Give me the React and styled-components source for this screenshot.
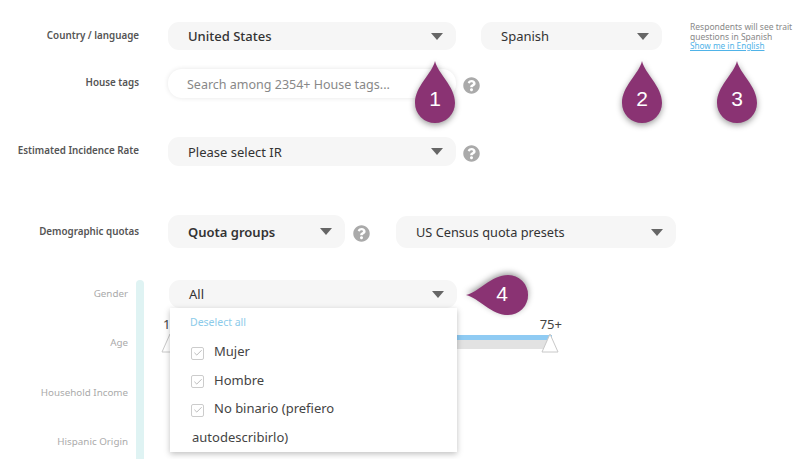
import styled, { createGlobalStyle } from 'styled-components';
import { FaQuestionCircle } from 'react-icons/fa';
import { Check } from 'lucide-react';

const GlobalStyle = createGlobalStyle`
  html, body {
    margin: 0;
    background: #fff;
    font-family: "Noto Sans", "Open Sans", sans-serif;
  }
`;

const Pin = ({ number, x, y, sideways }) => (
  <PinBox $x={x} $y={y} $sideways={sideways}>
    <PinShape viewBox="0 0 40 62" $sideways={sideways}>
      <path d="M20 0 C23 13 40 25 40 42 A20 20 0 0 1 0 42 C0 25 17 13 20 0 Z" fill="#8a3373" />
    </PinShape>
    <PinNumber $sideways={sideways}>{number}</PinNumber>
  </PinBox>
);

const Select = ({ width, height, weight, size, children }) => (
  <SelectBox $width={width} $height={height}>
    <SelectText $weight={weight} $size={size}>{children}</SelectText>
    <Caret />
  </SelectBox>
);

const Help = ({ gap }) => (
  <HelpIcon $gap={gap}>
    <FaQuestionCircle size={17} />
  </HelpIcon>
);

const Option = ({ children }) => (
  <OptionRow>
    <CheckBox><Check size={10} strokeWidth={1.6} /></CheckBox>
    {children}
  </OptionRow>
);

const SliderHandle = ({ side }) => (
  <Handle $side={side} viewBox="0 0 18 20">
    <path d="M9 1 L17 19 L1 19 Z" fill="#fff" stroke="#c8c8c8" strokeLinejoin="round" />
  </Handle>
);

const App = () => (
  <Page>
    <GlobalStyle />

    <Row>
      <RowLabel>Country / language</RowLabel>
      <Select width={288} weight={500}>United States</Select>
      <Spaced $gap={25}>
        <Select width={181}>Spanish</Select>
      </Spaced>
      <Note>
        Respondents will see trait questions in Spanish
        <NoteLink href="#">Show me in English</NoteLink>
      </Note>
    </Row>

    <Row $top={19}>
      <RowLabel>House tags</RowLabel>
      <SearchInput placeholder="Search among 2354+ House tags..." />
      <Help />
    </Row>

    <Row $top={39}>
      <RowLabel>Estimated Incidence Rate</RowLabel>
      <Select width={288} height={29}>Please select IR</Select>
      <Help />
    </Row>

    <Row $top={49}>
      <RowLabel $height={33}>Demographic quotas</RowLabel>
      <Select width={177} height={33} weight={600}>Quota groups</Select>
      <Help gap={8} />
      <Spaced $gap={26} $top={1}>
        <Select width={280} height={32} size={12.75}>US Census quota presets</Select>
      </Spaced>
    </Row>

    <QuotaSection>
      <QuotaLabels>
        <QuotaLabel>Gender</QuotaLabel>
        <QuotaLabel>Age</QuotaLabel>
        <QuotaLabel>Household Income</QuotaLabel>
        <QuotaLabel>Hispanic Origin</QuotaLabel>
      </QuotaLabels>
      <Rail />
      <QuotaContent>
        <Select width={288}>All</Select>
        <Slider>
          <SliderValues>
            <span>18</span>
            <span>75+</span>
          </SliderValues>
          <Track>
            <TrackFill />
          </Track>
          <SliderHandle side="left" />
          <SliderHandle side="right" />
        </Slider>
        <Menu>
          <Deselect>Deselect all</Deselect>
          <Option>Mujer</Option>
          <Option>Hombre</Option>
          <Option>No binario (prefiero autodescribirlo)</Option>
        </Menu>
      </QuotaContent>
    </QuotaSection>

    <Pin number="1" x={415} y={61} />
    <Pin number="2" x={622} y={61} />
    <Pin number="3" x={717} y={61} />
    <Pin number="4" x={466} y={275} sideways />
  </Page>
);

/* ================= STYLES ================= */

const Page = styled.div`
  position: relative;
  width: 800px;
  height: 459px;
  padding-top: 22px;
  box-sizing: border-box;
  overflow: hidden;
`;

const Row = styled.div`
  display: flex;
  align-items: flex-start;
  margin-top: ${(p) => p.$top || 0}px;
`;

const RowLabel = styled.div`
  width: 139px;
  margin-right: 29px;
  flex-shrink: 0;
  text-align: right;
  font-size: 9.8px;
  font-weight: 600;
  line-height: ${(p) => p.$height || 28}px;
  color: #555;
  white-space: nowrap;
`;

const Spaced = styled.div`
  margin-left: ${(p) => p.$gap}px;
  margin-top: ${(p) => p.$top || 0}px;
`;

const SelectBox = styled.div`
  display: flex;
  align-items: center;
  justify-content: space-between;
  box-sizing: border-box;
  width: ${(p) => p.$width}px;
  height: ${(p) => p.$height || 28}px;
  padding: 0 13px 0 20px;
  background: #f6f6f6;
  border-radius: 11px;
`;

const SelectText = styled.span`
  font-size: ${(p) => p.$size || 13}px;
  font-weight: ${(p) => p.$weight || 400};
  color: #333;
  white-space: nowrap;
`;

const Caret = styled.span`
  width: 0;
  height: 0;
  border-left: 6.5px solid transparent;
  border-right: 6.5px solid transparent;
  border-top: 7px solid #666;
`;

const Note = styled.div`
  width: 105px;
  height: 28px;
  margin-left: 28px;
  font-size: 8.5px;
  line-height: 9.5px;
  color: #888;
`;

const NoteLink = styled.a`
  display: block;
  font-size: 8.2px;
  color: #4fb3e8;
  text-decoration: underline;
`;

const SearchInput = styled.input`
  box-sizing: border-box;
  width: 288px;
  height: 29px;
  padding: 1px 19px 0;
  border: none;
  outline: none;
  border-radius: 14px;
  background: #fff;
  box-shadow: 0 0 5px rgba(0, 0, 0, 0.1);
  font-family: inherit;
  font-size: 12.5px;

  &::placeholder {
    color: #888;
    opacity: 1;
  }
`;

const HelpIcon = styled.span`
  display: flex;
  align-items: center;
  align-self: stretch;
  box-sizing: border-box;
  padding-top: 3px;
  margin-left: ${(p) => p.$gap || 7}px;
  color: #aaa;
`;

const QuotaSection = styled.div`
  display: flex;
  margin-top: 32px;
`;

const QuotaLabels = styled.div`
  width: 128px;
  flex-shrink: 0;
`;

const QuotaLabel = styled.div`
  height: 49.33px;
  line-height: 28px;
  text-align: right;
  font-size: 9.8px;
  color: #aaa;
  white-space: nowrap;
`;

const Rail = styled.div`
  width: 8px;
  height: 200px;
  margin-left: 8px;
  background: #dff3f3;
  border-radius: 4px 4px 0 0;
`;

const QuotaContent = styled.div`
  position: relative;
  margin-left: 25px;
`;

const Slider = styled.div`
  position: relative;
  width: 401px;
  margin: 9px 0 0 -8px;
`;

const SliderValues = styled.div`
  display: flex;
  justify-content: space-between;
  height: 18px;
  padding-left: 2px;
  font-size: 13px;
  line-height: 14px;
  color: #444;
`;

const Track = styled.div`
  height: 14px;
  margin: 0 10px 0 10px;
  background: #e2e2e2;
`;

const TrackFill = styled.div`
  height: 5px;
  background: #8fcbf3;
`;

const Handle = styled.svg`
  position: absolute;
  top: 16px;
  width: 18px;
  height: 20px;
  ${(p) => (p.$side === 'left' ? 'left: 0;' : 'right: 3px;')}
`;

const Menu = styled.div`
  position: absolute;
  top: 28px;
  left: 1px;
  box-sizing: border-box;
  width: 287px;
  height: 144px;
  padding: 6px 100px 0 22px;
  background: #fff;
  box-shadow: 0 2px 6px rgba(0, 0, 0, 0.25);
`;

const Deselect = styled.div`
  margin: 0 0 7px -2px;
  font-size: 10.5px;
  line-height: 16px;
  color: #8ccbea;
`;

const OptionRow = styled.div`
  font-size: 13px;
  line-height: 28.5px;
  color: #444;
`;

const CheckBox = styled.span`
  display: inline-flex;
  align-items: center;
  justify-content: center;
  box-sizing: border-box;
  width: 13px;
  height: 13px;
  margin: 0 10px 0 -1px;
  vertical-align: -2px;
  border: 1px solid #ccc;
  border-radius: 2px;
  color: #999;
`;

const PinBox = styled.div`
  position: absolute;
  left: ${(p) => p.$x}px;
  top: ${(p) => p.$y}px;
  width: ${(p) => (p.$sideways ? 62 : 40)}px;
  height: ${(p) => (p.$sideways ? 40 : 62)}px;
`;

const PinShape = styled.svg`
  position: absolute;
  left: ${(p) => (p.$sideways ? 11 : 0)}px;
  top: ${(p) => (p.$sideways ? -11 : 0)}px;
  width: 40px;
  height: 62px;
  transform: ${(p) => (p.$sideways ? 'rotate(-90deg)' : 'none')};
  filter: drop-shadow(${(p) => (p.$sideways ? '2px 0' : '0 2px')} 3px rgba(0, 0, 0, 0.4));
`;

const PinNumber = styled.span`
  position: absolute;
  left: ${(p) => (p.$sideways ? 16 : 0)}px;
  bottom: ${(p) => (p.$sideways ? 9 : 12)}px;
  width: 40px;
  text-align: center;
  font-family: "Liberation Sans", Arial, sans-serif;
  font-size: 21px;
  line-height: 24px;
  color: #fff;
`;

export default App;
